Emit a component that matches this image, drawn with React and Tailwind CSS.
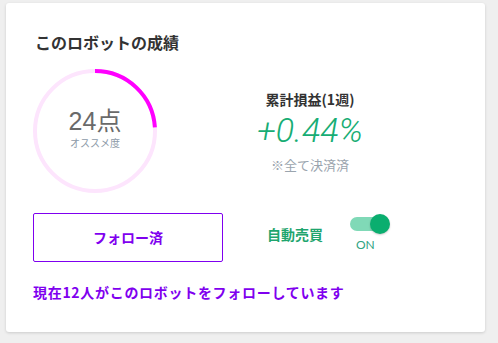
const jp = { fontFamily: '"Noto Sans CJK JP", "Noto Sans", sans-serif' };

function ScoreRing({ score }) {
  const r = 60;
  const c = 2 * Math.PI * r;
  return (
    <div className="relative h-[124px] w-[124px] shrink-0">
      <svg width="124" height="124" viewBox="0 0 124 124" className="-rotate-90">
        <circle cx="62" cy="62" r={r} fill="none" stroke="#fde5fd" strokeWidth="4" />
        <circle
          cx="62"
          cy="62"
          r={r}
          fill="none"
          stroke="#ff00ff"
          strokeWidth="4"
          strokeDasharray={`${(c * score) / 100} ${c}`}
        />
      </svg>
      <div className="absolute inset-0 flex flex-col items-center pt-[38px]">
        <span
          className="text-[25px] leading-[28px] text-[#6a6a6a]"
          style={{ fontFamily: '"Liberation Sans", "Noto Sans CJK JP", sans-serif' }}
        >
          {score}点
        </span>
        <span className="mt-[1px] text-[10px] leading-[14px] text-[#8d9aa8]">オススメ度</span>
      </div>
    </div>
  );
}

function Toggle({ on }) {
  return (
    <div className="flex flex-col items-start">
      <div className="relative h-[20px] w-[40px]">
        <div className="absolute left-0 top-[3px] h-[14px] w-[36px] rounded-full bg-[#80d9b7]" />
        <div className="absolute right-0 top-0 h-[20px] w-[20px] rounded-full bg-[#0aae6f] shadow-[0_1px_2px_rgba(0,0,0,0.2)]" />
      </div>
      <span
        className="ml-[6px] mt-[4px] text-[12px] leading-[14px] text-[#2fa483]"
        style={{ fontFamily: "Lato, sans-serif" }}
      >
        {on ? "ON" : "OFF"}
      </span>
    </div>
  );
}

export default function App() {
  return (
    <div className="min-h-screen bg-[#efefef] pl-[6px] pt-[3px]" style={jp}>
      <div className="h-[329px] w-[479px] rounded-[3px] bg-white pl-[27px] pt-[28px] shadow-[0_1px_3px_rgba(0,0,0,0.15)]">
        <h2 className="ml-[2px] text-[16px] font-bold leading-[22px] text-[#333]">このロボットの成績</h2>

        <div className="mt-[16px] flex">
          <ScoreRing score={24} />
          <div className="ml-[73px] flex w-[160px] flex-col items-center pt-[21px]">
            <span className="text-[14px] font-bold leading-[18px] text-[#333]">累計損益(1週)</span>
            <span
              className="mt-[3px] text-[34px] font-light italic leading-[38px] text-[#17ad74]"
              style={{ fontFamily: "Roboto, sans-serif" }}
            >
              +0.44%
            </span>
            <span className="mt-[7px] text-[13px] leading-[18px] text-[#9aa4ae]">※全て決済済</span>
          </div>
        </div>

        <div className="mt-[20px] flex items-start">
          <button
            type="button"
            className="h-[49px] w-[190px] rounded-[2px] border border-[#7f00ef] text-[14px] font-bold text-[#7f00ef]"
          >
            フォロー済
          </button>
          <span className="ml-[44px] mt-[11px] text-[14px] font-bold leading-[20px] text-[#1fa56e]">自動売買</span>
          <div className="ml-[27px] mt-[1px]">
            <Toggle on />
          </div>
        </div>

        <p className="mt-[20px] text-[14px] font-bold leading-[20px] tracking-[0.7px] text-[#7f00ef]">
          現在12人がこのロボットをフォローしています
        </p>
      </div>
    </div>
  );
}
